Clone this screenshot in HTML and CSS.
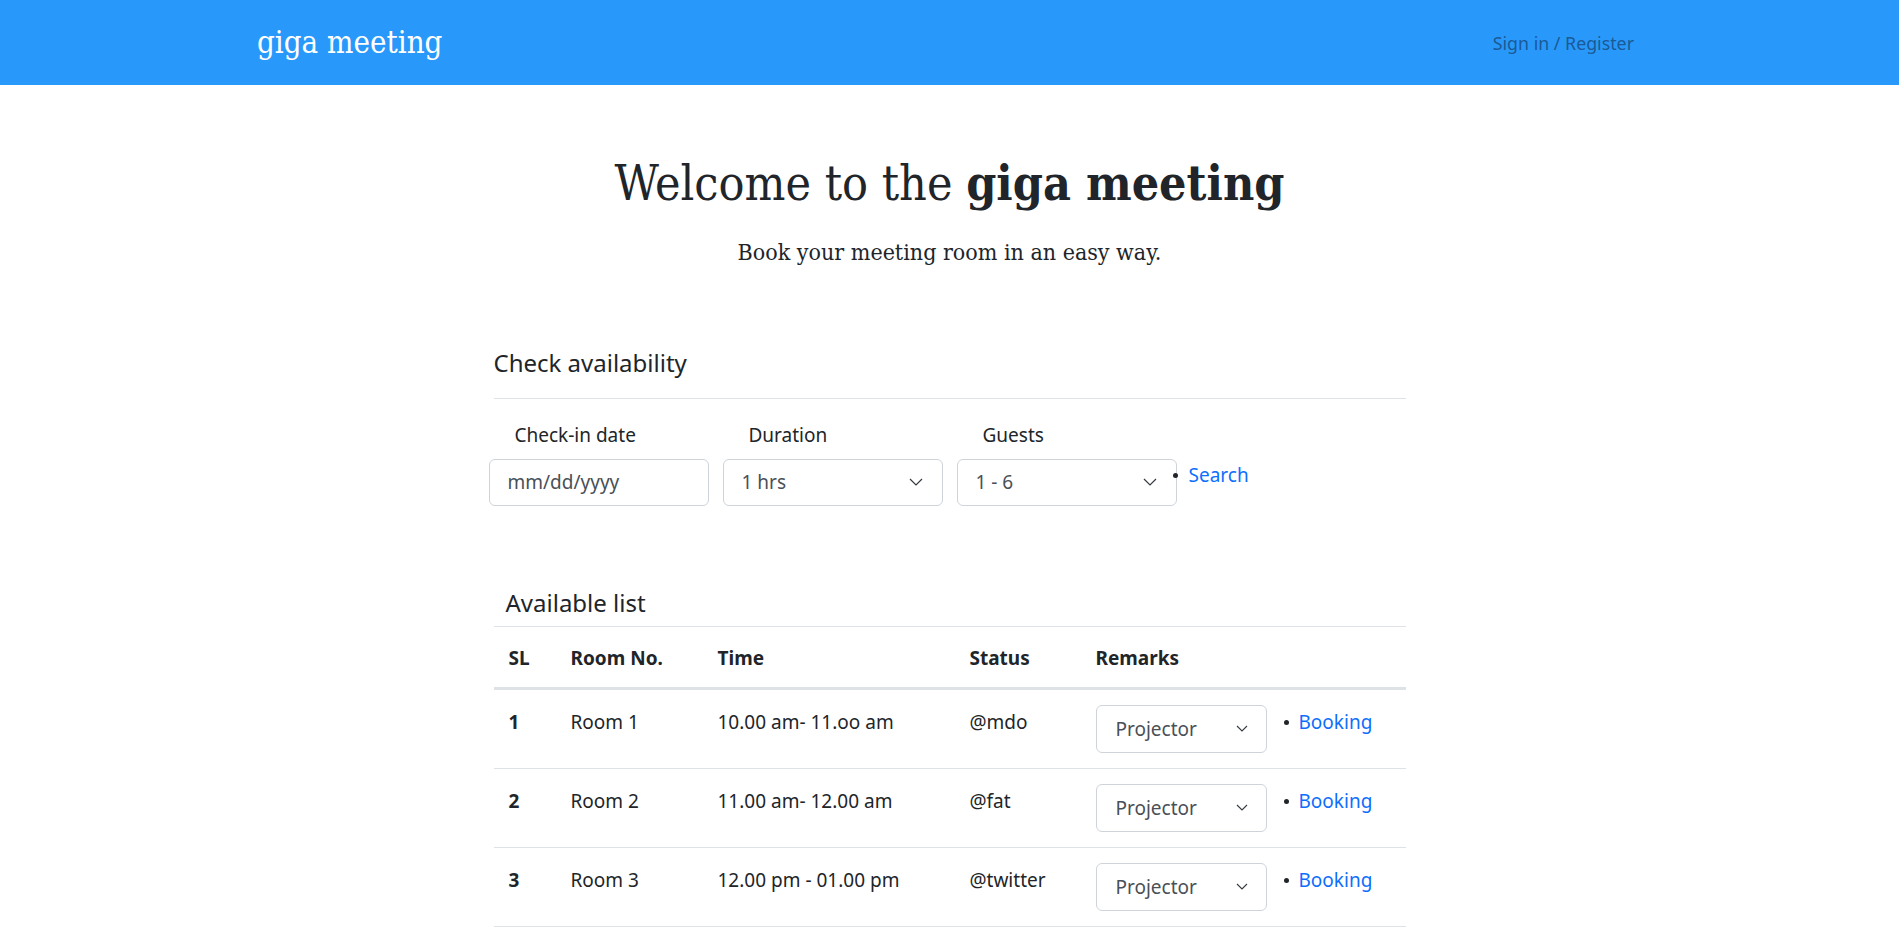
FILE: index.html
```html
<!DOCTYPE html>
<html lang="en">
<head>
<meta charset="utf-8">
<title>giga meeting</title>
<link rel="stylesheet" href="styles.css">
</head>
<body>
<header class="topbar">
  <div class="topbar-inner">
    <a class="brand" href="#">giga meeting</a>
    <a class="auth-link" href="#">Sign in / Register</a>
  </div>
</header>
<main>
  <section class="hero">
    <h1 class="hero-title">Welcome to the <strong>giga meeting</strong></h1>
    <p class="hero-lead">Book your meeting room in an easy way.</p>
  </section>

  <section class="panel">
    <h4 class="panel-title">Check availability</h4>
    <div class="search-row">
      <div class="field">
        <label class="field-label">Check-in date</label>
        <div class="box">mm/dd/yyyy</div>
      </div>
      <div class="field">
        <label class="field-label">Duration</label>
        <div class="box"><span>1 hrs</span><svg class="chev" width="14" height="8" viewBox="0 0 14 8"><path d="M1 1l6 6 6-6" fill="none" stroke="#343a40" stroke-width="1.2"/></svg></div>
      </div>
      <div class="field field-last">
        <label class="field-label">Guests</label>
        <div class="box"><span>1 - 6</span><svg class="chev" width="14" height="8" viewBox="0 0 14 8"><path d="M1 1l6 6 6-6" fill="none" stroke="#343a40" stroke-width="1.2"/></svg></div>
      </div>
      <ul class="action action-search"><li><a href="#">Search</a></li></ul>
    </div>
  </section>

  <section class="panel">
    <h4 class="list-title">Available list</h4>
    <table class="rooms">
      <colgroup>
        <col class="c-sl"><col class="c-room"><col class="c-time"><col class="c-status"><col>
      </colgroup>
      <thead>
        <tr><th>SL</th><th>Room No.</th><th>Time</th><th>Status</th><th>Remarks</th></tr>
      </thead>
      <tbody>
        <tr>
          <td class="num">1</td><td>Room 1</td><td>10.00 am- 11.oo am</td><td>@mdo</td>
          <td class="remarks"><div class="remark">
            <div class="select-sm"><span>Projector</span><svg width="12" height="7" viewBox="0 0 12 7"><path d="M1 1l5 5 5-5" fill="none" stroke="#343a40" stroke-width="1.1"/></svg></div>
            <ul class="action action-book"><li><a href="#">Booking</a></li></ul>
          </div></td>
        </tr>
        <tr>
          <td class="num">2</td><td>Room 2</td><td>11.00 am- 12.00 am</td><td>@fat</td>
          <td class="remarks"><div class="remark">
            <div class="select-sm"><span>Projector</span><svg width="12" height="7" viewBox="0 0 12 7"><path d="M1 1l5 5 5-5" fill="none" stroke="#343a40" stroke-width="1.1"/></svg></div>
            <ul class="action action-book"><li><a href="#">Booking</a></li></ul>
          </div></td>
        </tr>
        <tr>
          <td class="num">3</td><td>Room 3</td><td>12.00 pm - 01.00 pm</td><td>@twitter</td>
          <td class="remarks"><div class="remark">
            <div class="select-sm"><span>Projector</span><svg width="12" height="7" viewBox="0 0 12 7"><path d="M1 1l5 5 5-5" fill="none" stroke="#343a40" stroke-width="1.1"/></svg></div>
            <ul class="action action-book"><li><a href="#">Booking</a></li></ul>
          </div></td>
        </tr>
      </tbody>
    </table>
  </section>
</main>
</body>
</html>
```

FILE: styles.css
```css
* { box-sizing: border-box; }

html, body { overflow: hidden; }

body {
  margin: 0;
  font-family: "Noto Sans", "Open Sans", sans-serif;
  font-size: 19px;
  line-height: 1.5;
  color: #212529;
  background: #fff;
}

a { text-decoration: none; }

/* top bar */
.topbar {
  background: #2899fb;
  height: 85px;
}
.topbar-inner {
  height: 100%;
  display: flex;
  align-items: center;
  justify-content: space-between;
  padding: 0 265px 0 257px;
}
.brand {
  font-family: "DejaVu Serif Condensed", "DejaVu Serif", serif;
  font-stretch: condensed;
  font-size: 31px;
  line-height: 1;
  color: #fff;
  padding-bottom: 1px;
}
.auth-link {
  font-size: 17.8px;
  color: #1b5a96;
  padding-top: 2px;
}

/* hero */
.hero {
  text-align: center;
  padding-top: 69px;
}
.hero-title {
  margin: 0;
  font-family: "DejaVu Serif Condensed", "DejaVu Serif", serif;
  font-stretch: condensed;
  font-size: 48px;
  line-height: 58px;
  font-weight: 400;
}
.hero-title strong { font-weight: 700; }
.hero-lead {
  margin: 23px 0 0;
  font-family: "DejaVu Serif Condensed", "DejaVu Serif", serif;
  font-stretch: condensed;
  font-size: 23px;
  line-height: 34.5px;
}

/* panels */
.panel {
  width: 912px;
  margin: 0 auto;
}
.panel-title {
  margin: 79.3px 0 0;
  font-size: 24px;
  line-height: 28.8px;
  font-weight: 400;
  padding-bottom: 20px;
  border-bottom: 1px solid #dee2e6;
}

.search-row {
  display: flex;
  align-items: flex-start;
  margin: 22px 0 0 -5px;
}
.field {
  display: flex;
  flex-direction: column;
  width: 220px;
  margin-right: 14px;
}
.field-last { margin-right: 0; }
.field-label {
  padding-left: 26px;
  line-height: 28.5px;
  margin-bottom: 9.5px;
}
.box {
  height: 47px;
  border: 1px solid #ced4da;
  border-radius: 6px;
  display: flex;
  align-items: center;
  justify-content: space-between;
  padding: 0 19px 0 18px;
  color: #495057;
}

.action {
  list-style: none;
  margin: 0;
  padding: 0;
}
.action li {
  display: flex;
  align-items: center;
  line-height: 28.5px;
}
.action li::before {
  content: "";
  width: 5px;
  height: 5px;
  border-radius: 50%;
  background: #212529;
  margin-right: 11px;
}
.action a { color: #0d6efd; }
.action-search {
  margin-top: 40.4px;
  margin-left: -4px;
}

/* list */
.list-title {
  margin: 83px 0 0;
  font-size: 24px;
  line-height: 28.8px;
  font-weight: 400;
  padding: 0 0 9px 12px;
  border-bottom: 1px solid #dee2e6;
}

.rooms {
  width: 100%;
  border-collapse: collapse;
  table-layout: fixed;
}
.c-sl { width: 62px; }
.c-room { width: 147px; }
.c-time { width: 252px; }
.c-status { width: 126px; }

.rooms th {
  text-align: left;
  font-weight: 700;
  line-height: 28.5px;
  padding: 17px 15px 14px;
  border-bottom: 3px solid #dee2e6;
}
.rooms td {
  vertical-align: top;
  line-height: 28.5px;
  padding: 18px 15px 14px;
  border-bottom: 1px solid #dee2e6;
}
.rooms td.num { font-weight: 700; }
.rooms td.remarks { padding: 15px 15px; }

.remark {
  display: flex;
  align-items: flex-start;
}
.select-sm {
  width: 171px;
  height: 48px;
  border: 1px solid #ced4da;
  border-radius: 6px;
  display: flex;
  align-items: center;
  justify-content: space-between;
  padding: 0 18px 0 19px;
  color: #495057;
  flex-shrink: 0;
}
.action-book {
  margin: 3.4px 0 0 17px;
}
.action-book li::before { margin-right: 10px; }
```
